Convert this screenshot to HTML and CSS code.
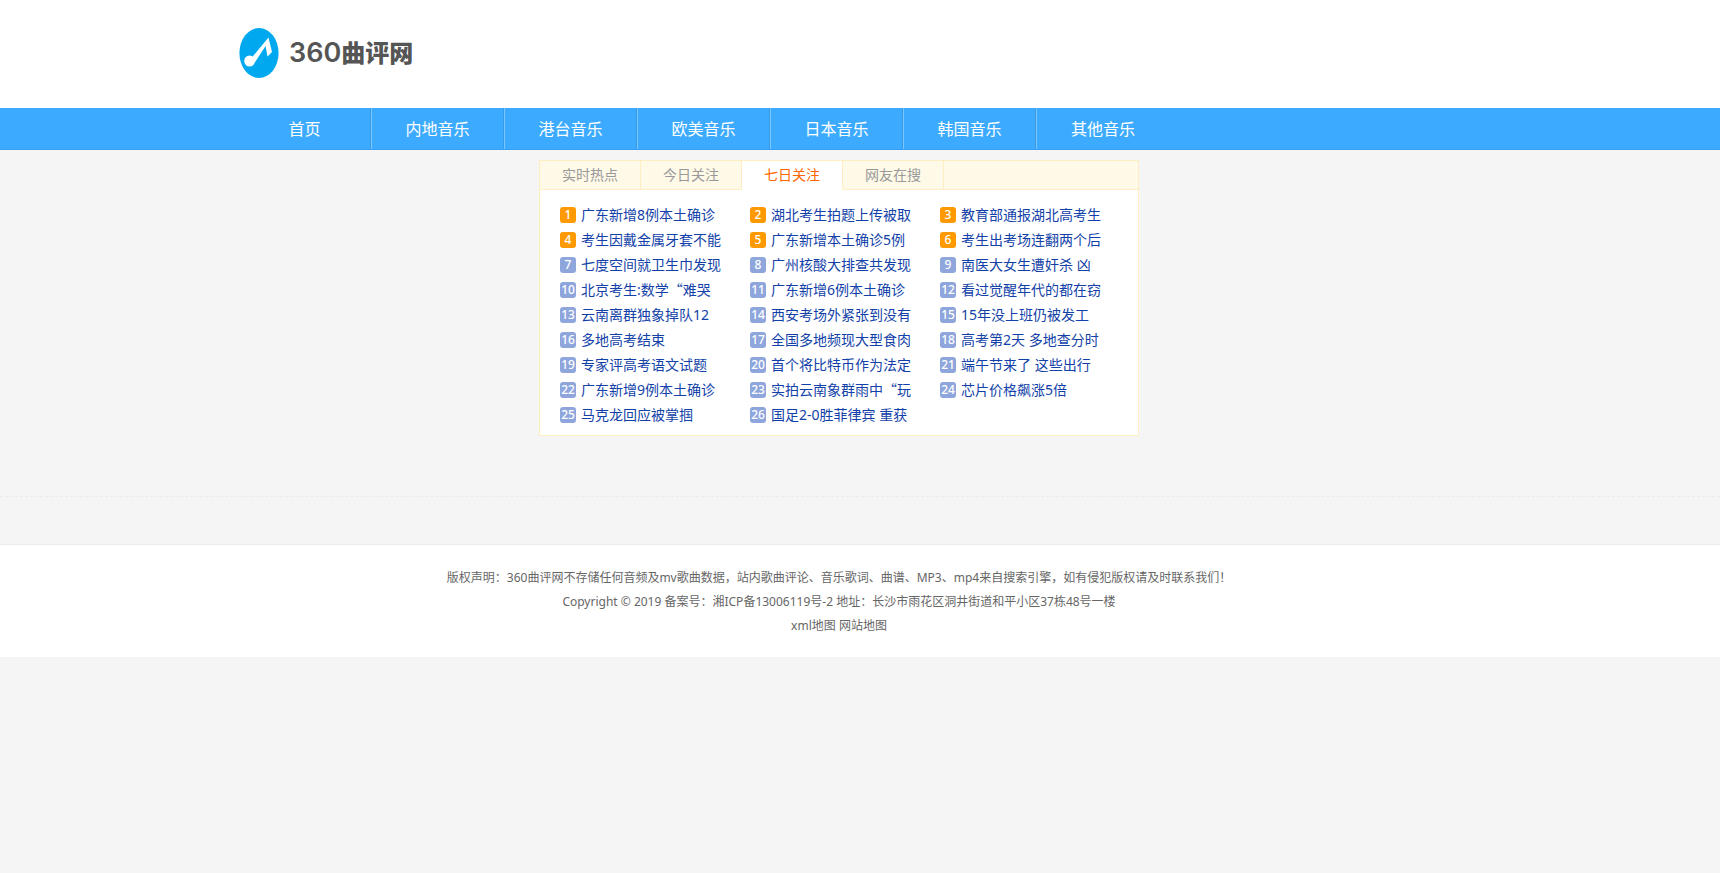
FILE: index.html
```html
<!DOCTYPE html>
<html lang="zh-CN">
<head>
<meta charset="utf-8">
<title>360曲评网</title>
<link rel="stylesheet" href="styles.css">
</head>
<body>
<header class="header">
  <div class="wrap">
    <a class="logo" href="#">
      <svg class="logo-mark" viewBox="0 0 40 50" aria-hidden="true">
        <ellipse cx="20" cy="25" rx="19.6" ry="25" fill="#00a9ef"/>
        <ellipse cx="10.600" cy="33" rx="5.400" ry="5.600" fill="#fff"/>
        <path d="M12 30.500 L29.500 9.500 L33 24 L28.500 28.500 L26.600 18 L15.500 35 Z" fill="#fff"/>
      </svg>
      <span class="logo-text"><span class="logo-num">360</span>曲评网</span>
    </a>
  </div>
</header>
<nav class="nav">
  <ul class="wrap nav-list">
    <li><a href="#">首页</a></li>
    <li><a href="#">内地音乐</a></li>
    <li><a href="#">港台音乐</a></li>
    <li><a href="#">欧美音乐</a></li>
    <li><a href="#">日本音乐</a></li>
    <li><a href="#">韩国音乐</a></li>
    <li><a href="#">其他音乐</a></li>
  </ul>
</nav>
<main class="main">
  <section class="panel">
    <div class="tabs" role="tablist">
      <button class="tab" type="button" role="tab">实时热点</button>
      <button class="tab" type="button" role="tab">今日关注</button>
      <button class="tab active" type="button" role="tab" aria-selected="true">七日关注</button>
      <button class="tab" type="button" role="tab">网友在搜</button>
    </div>
    <ol class="topics">
      <li><span class="rank hot">1</span><a href="#">广东新增8例本土确诊</a></li>
      <li><span class="rank hot">2</span><a href="#">湖北考生拍题上传被取</a></li>
      <li><span class="rank hot">3</span><a href="#">教育部通报湖北高考生</a></li>
      <li><span class="rank hot">4</span><a href="#">考生因戴金属牙套不能</a></li>
      <li><span class="rank hot">5</span><a href="#">广东新增本土确诊5例</a></li>
      <li><span class="rank hot">6</span><a href="#">考生出考场连翻两个后</a></li>
      <li><span class="rank">7</span><a href="#">七度空间就卫生巾发现</a></li>
      <li><span class="rank">8</span><a href="#">广州核酸大排查共发现</a></li>
      <li><span class="rank">9</span><a href="#">南医大女生遭奸杀 凶</a></li>
      <li><span class="rank">10</span><a href="#">北京考生:数学<span class="cjk">“</span>难哭</a></li>
      <li><span class="rank">11</span><a href="#">广东新增6例本土确诊</a></li>
      <li><span class="rank">12</span><a href="#">看过觉醒年代的都在窃</a></li>
      <li><span class="rank">13</span><a href="#">云南离群独象掉队12</a></li>
      <li><span class="rank">14</span><a href="#">西安考场外紧张到没有</a></li>
      <li><span class="rank">15</span><a href="#">15年没上班仍被发工</a></li>
      <li><span class="rank">16</span><a href="#">多地高考结束</a></li>
      <li><span class="rank">17</span><a href="#">全国多地频现大型食肉</a></li>
      <li><span class="rank">18</span><a href="#">高考第2天 多地查分时</a></li>
      <li><span class="rank">19</span><a href="#">专家评高考语文试题</a></li>
      <li><span class="rank">20</span><a href="#">首个将比特币作为法定</a></li>
      <li><span class="rank">21</span><a href="#">端午节来了 这些出行</a></li>
      <li><span class="rank">22</span><a href="#">广东新增9例本土确诊</a></li>
      <li><span class="rank">23</span><a href="#">实拍云南象群雨中<span class="cjk">“</span>玩</a></li>
      <li><span class="rank">24</span><a href="#">芯片价格飙涨5倍</a></li>
      <li><span class="rank">25</span><a href="#">马克龙回应被掌掴</a></li>
      <li><span class="rank">26</span><a href="#">国足2-0胜菲律宾 重获</a></li>
    </ol>
  </section>
</main>
<div class="divider"></div>
<footer class="footer">
  <p>版权声明：360曲评网不存储任何音频及mv歌曲数据，站内歌曲评论、音乐歌词、曲谱、MP3、mp4来自搜索引擎，如有侵犯版权请及时联系我们！</p>
  <p>Copyright © 2019 备案号：<a href="#">湘ICP备13006119号-2</a> 地址：长沙市雨花区洞井街道和平小区37栋48号一楼</p>
  <p><a href="#">xml地图</a> <a href="#">网站地图</a></p>
</footer>
</body>
</html>
```
FILE: styles.css
```css
* { box-sizing: border-box; }
body {
  margin: 0;
  background: #f5f5f5;
  color: #666;
  font: 12px/24px "Noto Sans", "Noto Sans CJK SC", sans-serif;
}
a { color: inherit; text-decoration: none; }
ul, ol, p { margin: 0; padding: 0; }
ul, ol { list-style: none; }
.cjk { font-family: "Noto Sans CJK SC", sans-serif; }

/* Every band shares the same right gutter, so the columns line up. */
.header, .nav, .main, .footer { padding-right: 42px; }
.wrap { max-width: 1200px; margin: 0 auto; }

.header { background: #fff; }
.header .wrap { padding: 28px 0 30px; }
.logo { display: flex; align-items: center; gap: 10px; width: max-content; height: 50px; }
.logo-mark { width: 40px; height: 50px; }
.logo-text {
  padding-bottom: 2px;
  color: #555;
  font: 900 24px/48px "Noto Sans CJK SC", sans-serif;
}
.logo-num { font: 600 27px/48px Inter, sans-serif; }

.nav { background: #3cabff; border-bottom: 1px solid #399ff0; }
.nav-list { display: flex; }
.nav-list a {
  display: flex;
  align-items: center;
  justify-content: center;
  width: 133px;
  height: 41px;
  border-right: 1px solid #359ae8;
  border-left: 1px solid #7cc6ff;
  color: #fff;
  font-size: 16px;
}
.nav-list li:first-child a { width: 132px; border-left: 0; }
.nav-list li:last-child a { border-right: 0; }

.main { padding-top: 10px; }
.panel {
  max-width: 600px;
  margin: 0 auto;
  border: 1px solid #ffedc4;
  background: #fff;
}
.tabs {
  display: flex;
  height: 29px;
  background: linear-gradient(#ffedc4, #ffedc4) left bottom / 100% 1px no-repeat #fff9e8;
}
.tab {
  width: 101px;
  padding: 0;
  border: solid #ffedc4;
  border-width: 0 1px 1px 0;
  background: #fff9e8;
  color: #999;
  font: inherit;
  font-size: 14px;
  cursor: pointer;
}
.tab.active { border-bottom-color: #fff; background: #fff; color: #f60; }
.topics {
  display: grid;
  grid-template-columns: repeat(3, 190px);
  padding: 12px 0 8px 20px;
}
.topics li { display: flex; align-items: center; gap: 5px; height: 25px; }
.topics a { color: #123fa8; font-size: 14px; white-space: nowrap; }
.rank {
  width: 16px;
  height: 16px;
  border-radius: 3px;
  background: #8ea6dc;
  color: #fff;
  font-size: 12px;
  font-weight: 500;
  line-height: 16px;
  text-align: center;
}
.rank.hot { background: #f90; }

.divider { height: 48px; margin-top: 60px; border-top: 1px dashed #ebebeb; }
.footer {
  padding-top: 21px;
  padding-bottom: 19px;
  border-top: 1px solid #ebebeb;
  background: #fff;
  text-align: center;
}
```
